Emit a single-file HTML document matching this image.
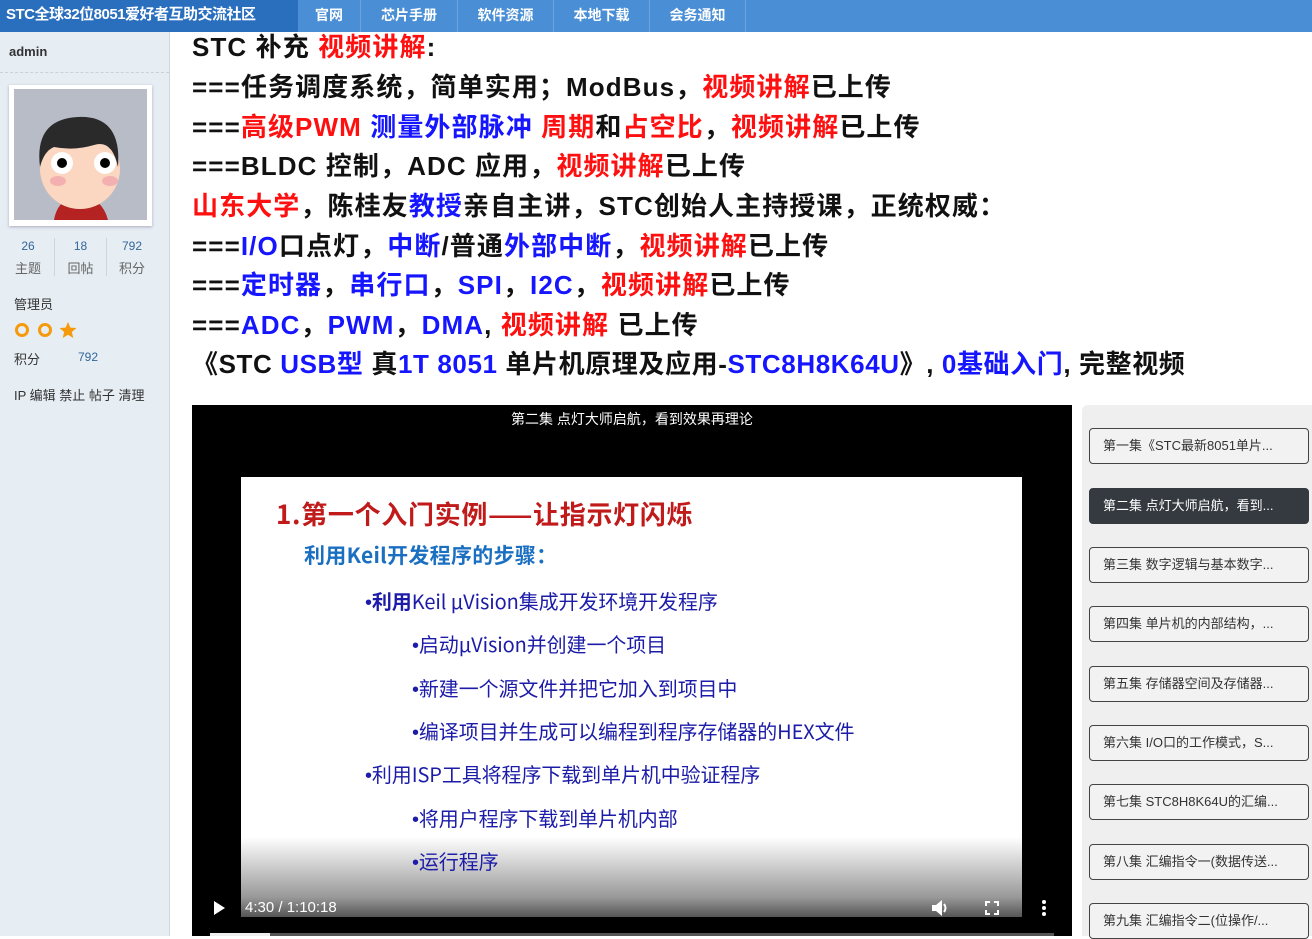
<!DOCTYPE html>
<html><head><meta charset="utf-8">
<style>
*{margin:0;padding:0;box-sizing:border-box}
body{width:1312px;height:936px;overflow:hidden;background:#fff;font-family:"Liberation Sans","Noto Sans CJK SC",sans-serif;position:relative}
.top{position:absolute;left:0;top:0;width:1312px;height:32px;background:#4a8fd6}
.brand{position:absolute;left:0;top:0;width:298px;height:32px;background:#2a6fbe;color:#fff;font-weight:bold;font-size:15px;line-height:30px;padding-left:6px;letter-spacing:-0.5px}
.nav{position:absolute;top:0;height:32px;color:#fff;font-weight:bold;font-size:14px;line-height:30px;text-align:center;border-right:1px solid #6aa3e0}
.side{position:absolute;left:0;top:32px;width:170px;height:904px;background:#e6edf3;border-right:1px solid #cdd6df}
.ab{position:absolute;white-space:nowrap}
.ml{position:absolute;left:192px;white-space:nowrap;font-size:26px;font-weight:bold;color:#111;line-height:32px;letter-spacing:1.1px;font-family:"Liberation Sans","Noto Sans CJK SC",sans-serif}
.r{color:#ff1010}.b{color:#1515ff}
.pl{position:absolute;left:1089px;width:220px;height:36px;border:1px solid #444;border-radius:4px;background:#f2f2f2;font-size:13px;color:#333;line-height:34px;padding-left:13px;white-space:nowrap}
.sl{position:absolute;white-space:nowrap;color:#1c1ca8;font-size:20px;letter-spacing:-0.1px;font-family:"Noto Sans CJK SC",sans-serif}
.bu{font-family:"Liberation Sans",sans-serif}
</style></head><body>
<div class="top"></div>
<div class="brand">STC全球32位8051爱好者互助交流社区</div>
<div class="nav" style="left:298px;width:63px">官网</div>
<div class="nav" style="left:361px;width:97px">芯片手册</div>
<div class="nav" style="left:458px;width:96px">软件资源</div>
<div class="nav" style="left:554px;width:96px">本地下载</div>
<div class="nav" style="left:650px;width:96px">会务通知</div>

<div class="side"></div>
<div class="ab" style="left:9px;top:44px;font-size:13px;font-weight:bold;color:#333">admin</div>
<div class="ab" style="left:0;top:72px;width:169px;border-top:1px dashed #c8d2dc"></div>
<div class="ab" style="left:9px;top:85px;width:143px;height:141px;background:#fff;box-shadow:0 1px 3px #aab">
<svg width="133" height="131" style="position:absolute;left:5px;top:4px" viewBox="0 0 133 131">
<rect width="133" height="131" fill="#b8bcc6"/>
<path d="M40 131 Q44 108 66 108 Q88 108 94 131Z" fill="#b52222"/>
<ellipse cx="66" cy="80" rx="40" ry="40" fill="#fbd6c0"/>
<path d="M26 78 Q20 30 64 28 Q108 26 104 78 Q98 50 80 56 Q60 62 40 58 Q30 62 26 78Z" fill="#2a2a2a"/>
<circle cx="48" cy="74" r="11" fill="#fff"/><circle cx="48" cy="74" r="5" fill="#000"/>
<circle cx="91" cy="74" r="11" fill="#fff"/><circle cx="91" cy="74" r="5" fill="#000"/>
<ellipse cx="44" cy="92" rx="8" ry="5" fill="#f4b0b0"/><ellipse cx="96" cy="92" rx="8" ry="5" fill="#f4b0b0"/>
</svg></div>
<div class="ab" style="left:0;top:239px;width:56px;text-align:center;font-size:12px;color:#336699">26</div>
<div class="ab" style="left:0;top:258px;width:56px;text-align:center;font-size:13px;color:#666">主题</div>
<div class="ab" style="left:54px;top:238px;height:38px;border-left:1px solid #cdd6df"></div>
<div class="ab" style="left:54px;top:239px;width:53px;text-align:center;font-size:12px;color:#336699">18</div>
<div class="ab" style="left:54px;top:258px;width:53px;text-align:center;font-size:13px;color:#666">回帖</div>
<div class="ab" style="left:106px;top:238px;height:38px;border-left:1px solid #cdd6df"></div>
<div class="ab" style="left:106px;top:239px;width:52px;text-align:center;font-size:12px;color:#336699">792</div>
<div class="ab" style="left:106px;top:258px;width:52px;text-align:center;font-size:13px;color:#666">积分</div>
<div class="ab" style="left:14px;top:294px;font-size:13px;color:#333">管理员</div>
<svg class="ab" style="left:14px;top:321px" width="64" height="18">
<circle cx="8" cy="9" r="5.5" fill="none" stroke="#f59a0c" stroke-width="3"/>
<circle cx="31" cy="9" r="5.5" fill="none" stroke="#f59a0c" stroke-width="3"/>
<path d="M54 1 L56.4 6.6 L62.5 7 L57.8 11 L59.3 17 L54 13.7 L48.7 17 L50.2 11 L45.5 7 L51.6 6.6Z" fill="#f59a0c"/>
</svg>
<div class="ab" style="left:14px;top:349px;font-size:13px;color:#333">积分</div>
<div class="ab" style="left:78px;top:350px;font-size:12px;color:#336699">792</div>
<div class="ab" style="left:14px;top:385px;font-size:13px;color:#333">IP 编辑 禁止 帖子 清理</div>

<div class="ml" style="top:31px">STC 补充 <span class="r">视频讲解</span>:</div>
<div class="ml" style="top:71px">===任务调度系统，简单实用；ModBus，<span class="r">视频讲解</span>已上传</div>
<div class="ml" style="top:111px">===<span class="r">高级PWM</span> <span class="b">测量外部脉冲</span> <span class="r">周期</span>和<span class="r">占空比</span>，<span class="r">视频讲解</span>已上传</div>
<div class="ml" style="top:150px">===BLDC 控制，ADC 应用，<span class="r">视频讲解</span>已上传</div>
<div class="ml" style="top:190px"><span class="r">山东大学</span>，陈桂友<span class="b">教授</span>亲自主讲，STC创始人主持授课，正统权威：</div>
<div class="ml" style="top:230px">===<span class="b">I/O</span>口点灯，<span class="b">中断</span>/普通<span class="b">外部中断</span>，<span class="r">视频讲解</span>已上传</div>
<div class="ml" style="top:269px">===<span class="b">定时器</span>，<span class="b">串行口</span>，<span class="b">SPI</span>，<span class="b">I2C</span>，<span class="r">视频讲解</span>已上传</div>
<div class="ml" style="top:309px">===<span class="b">ADC</span>，<span class="b">PWM</span>，<span class="b">DMA</span>, <span class="r">视频讲解</span> 已上传</div>
<div class="ml" style="top:348px;letter-spacing:0.6px">《STC <span class="b">USB型</span> 真<span class="b">1T 8051</span> 单片机原理及应用-<span class="b">STC8H8K64U</span>》, <span class="b">0基础入门</span>, 完整视频</div>

<div class="ab" style="left:192px;top:405px;width:880px;height:531px;background:#000"></div>
<div class="ab" style="left:192px;top:409px;width:880px;text-align:center;color:#fff;font-size:14px">第二集 点灯大师启航，看到效果再理论</div>
<div class="ab" style="left:241px;top:477px;width:781px;height:440px;background:linear-gradient(#fff 0,#fff 360px,#999 420px,#555 440px)"></div>
<div class="sl" style="left:276px;top:495px;font-size:26px;font-weight:bold;color:#c01a1a;letter-spacing:0.7px">1.第一个入门实例——让指示灯闪烁</div>
<div class="sl" style="left:304px;top:540px;font-size:21px;font-weight:bold;color:#1a6fc0;letter-spacing:0.3px">利用Keil开发程序的步骤：</div>
<div class="sl" style="left:365px;top:586px"><span class="bu">•</span><b>利用</b>Keil μVision集成开发环境开发程序</div>
<div class="sl" style="left:412px;top:629px"><span class="bu">•</span>启动μVision并创建一个项目</div>
<div class="sl" style="left:412px;top:673px"><span class="bu">•</span>新建一个源文件并把它加入到项目中</div>
<div class="sl" style="left:412px;top:716px"><span class="bu">•</span>编译项目并生成可以编程到程序存储器的HEX文件</div>
<div class="sl" style="left:365px;top:759px"><span class="bu">•</span>利用ISP工具将程序下载到单片机中验证程序</div>
<div class="sl" style="left:412px;top:803px"><span class="bu">•</span>将用户程序下载到单片机内部</div>
<div class="sl" style="left:412px;top:846px"><span class="bu">•</span>运行程序</div>
<svg class="ab" style="left:213px;top:900px" width="14" height="16"><path d="M1 1 L12 8 L1 15Z" fill="#fff"/></svg>
<div class="ab" style="left:245px;top:899px;color:#fff;font-size:15px">4:30 / 1:10:18</div>
<svg class="ab" style="left:930px;top:899px" width="20" height="18"><path d="M2 6h4l6-5v16l-6-5H2z" fill="#fff"/><path d="M14 5q3 4 0 8" stroke="#fff" stroke-width="2" fill="none"/></svg>
<svg class="ab" style="left:985px;top:901px" width="14" height="14"><path d="M1 5V1h4M9 1h4v4M13 9v4H9M5 13H1V9" stroke="#fff" stroke-width="2" fill="none"/></svg>
<svg class="ab" style="left:1041px;top:900px" width="6" height="16"><circle cx="3" cy="2" r="2" fill="#fff"/><circle cx="3" cy="8" r="2" fill="#fff"/><circle cx="3" cy="14" r="2" fill="#fff"/></svg>
<div class="ab" style="left:210px;top:933px;width:844px;height:3px;background:#555"></div>
<div class="ab" style="left:210px;top:933px;width:60px;height:3px;background:#eee"></div>

<div class="ab" style="left:1082px;top:405px;width:230px;height:531px;background:#efefef;border-radius:6px 0 0 0"></div>
<div class="pl" style="top:428px">第一集《STC最新8051单片...</div>
<div class="pl" style="top:488px;background:#343a40;color:#fff;border-color:#343a40">第二集 点灯大师启航，看到...</div>
<div class="pl" style="top:547px">第三集 数字逻辑与基本数字...</div>
<div class="pl" style="top:606px">第四集 单片机的内部结构，...</div>
<div class="pl" style="top:666px">第五集 存储器空间及存储器...</div>
<div class="pl" style="top:725px">第六集 I/O口的工作模式，S...</div>
<div class="pl" style="top:784px">第七集 STC8H8K64U的汇编...</div>
<div class="pl" style="top:844px">第八集 汇编指令一(数据传送...</div>
<div class="pl" style="top:903px">第九集 汇编指令二(位操作/...</div>
</body></html>
